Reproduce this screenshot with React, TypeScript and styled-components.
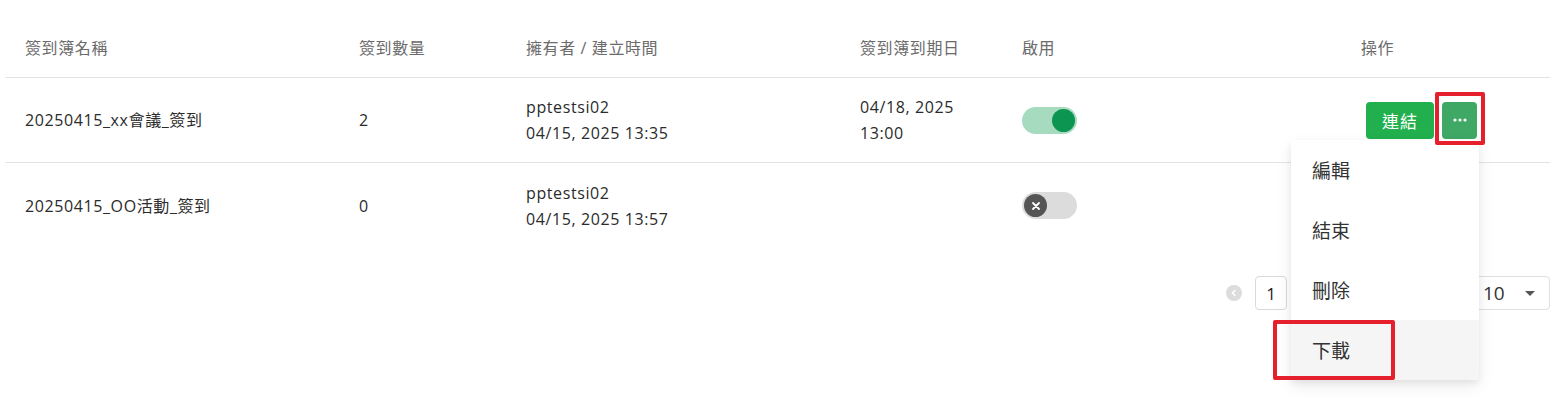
import React from 'react'
import styled, { createGlobalStyle } from 'styled-components'

const GlobalStyle = createGlobalStyle`
  html, body {
    margin: 0;
    background: #fff;
    font-family: "Open Sans", "Noto Sans CJK TC", sans-serif;
    color: #333;
  }
`

const COLS = '334px 167px 334px 162px 339px 209px'

const Page = styled.div`
  padding: 16px 12px 0 5px;
  width: 1562px;
  min-height: 399px;
  box-sizing: border-box;
`

const Table = styled.div`
  width: 1545px;
`

const HeadRow = styled.div`
  display: grid;
  grid-template-columns: ${COLS};
  height: 62px;
  align-items: center;
  border-bottom: 1px solid #e3e3e3;
  box-sizing: border-box;
`

const Row = styled.div<{ last?: boolean }>`
  display: grid;
  grid-template-columns: ${COLS};
  height: 85px;
  align-items: center;
  border-bottom: ${({ last }) => (last ? 'none' : '1px solid #e3e3e3')};
  box-sizing: border-box;
`

const HeadCell = styled.div`
  padding-left: 20px;
  font-size: 16px;
  color: #6b6b6b;
  letter-spacing: 0.6px;
`

const Cell = styled.div`
  padding-left: 20px;
  font-size: 16px;
  line-height: 26px;
  color: #2b2b2b;
  letter-spacing: 0.6px;
`

const Toggle = styled.div<{ on: boolean }>`
  position: relative;
  width: 55px;
  height: 27px;
  border-radius: 14px;
  background: ${({ on }) => (on ? '#a7dbc0' : '#dcdcdc')};
`

const Knob = styled.div<{ on: boolean }>`
  position: absolute;
  top: 2px;
  left: ${({ on }) => (on ? '30px' : '2px')};
  width: 23px;
  height: 23px;
  border-radius: 50%;
  background: ${({ on }) => (on ? '#0b9550' : '#555')};
  display: flex;
  align-items: center;
  justify-content: center;
`

const ActionCell = styled.div`
  padding-left: 25px;
  display: flex;
  align-items: center;
  gap: 8px;
`

const LinkButton = styled.button`
  width: 68px;
  height: 37px;
  border: none;
  border-radius: 4px;
  background: #21b04d;
  color: #fff;
  font-family: inherit;
  font-size: 17px;
  letter-spacing: 1px;
  padding: 0;
`

const MoreWrap = styled.div`
  position: relative;
  z-index: 5;
`

const MoreButton = styled.button`
  width: 35px;
  height: 37px;
  border: none;
  border-radius: 4px;
  background: #3fa865;
  color: #fff;
  padding: 0;
  display: flex;
  align-items: center;
  justify-content: center;
`

const RedBox = styled.div<{ l: number; t: number; w: number; h: number }>`
  position: absolute;
  left: ${({ l }) => l}px;
  top: ${({ t }) => t}px;
  width: ${({ w }) => w}px;
  height: ${({ h }) => h}px;
  border: 4px solid #e5202c;
  border-radius: 2px;
  box-sizing: border-box;
  pointer-events: none;
  z-index: 3;
`

const Menu = styled.div`
  position: absolute;
  top: 38px;
  right: -2px;
  width: 188px;
  background: #fff;
  box-shadow: 0 6px 16px rgba(0, 0, 0, 0.08), 0 3px 6px rgba(0, 0, 0, 0.06);
  border-radius: 2px;
  z-index: 2;
`

const MenuItem = styled.div<{ active?: boolean }>`
  position: relative;
  height: 60px;
  display: flex;
  align-items: center;
  padding-left: 21px;
  font-size: 19px;
  color: #333;
  background: ${({ active }) => (active ? '#f5f5f5' : '#fff')};
`

const Pager = styled.div`
  display: flex;
  justify-content: flex-end;
  align-items: center;
  gap: 12px;
  margin-top: 28px;
  width: 1545px;
`

const PrevIcon = styled.div`
  width: 16px;
  height: 16px;
  border-radius: 50%;
  background: #dcdcdc;
  display: flex;
  align-items: center;
  justify-content: center;
  margin-right: 1px;
`

const PageBox = styled.div`
  width: 32px;
  height: 34px;
  border: 1px solid #d9d9d9;
  border-radius: 4px;
  box-sizing: border-box;
  display: flex;
  align-items: center;
  justify-content: center;
  font-size: 17px;
  color: #222;
`

// the total-pages text and the next arrow sit behind the open menu
const PagerGap = styled.div`
  width: 151px;
  height: 34px;
`

const SizeSelect = styled.div`
  width: 88px;
  height: 34px;
  border: 1px solid #e0e0e0;
  border-radius: 4px;
  box-sizing: border-box;
  display: flex;
  align-items: center;
  justify-content: space-between;
  padding: 0 14px 0 20px;
  font-size: 19px;
  color: #333;
`

const Caret = styled.div`
  width: 0;
  height: 0;
  border-left: 5px solid transparent;
  border-right: 5px solid transparent;
  border-top: 5px solid #555;
`

const rows = [
  { name: '20250415_xx會議_簽到', count: '2', owner: 'pptestsi02', created: '04/15, 2025 13:35', due: ['04/18, 2025', '13:00'], on: true },
  { name: '20250415_OO活動_簽到', count: '0', owner: 'pptestsi02', created: '04/15, 2025 13:57', due: [], on: false },
]

const App: React.FC = () => {
  return (
    <Page>
      <GlobalStyle />
      <Table>
        <HeadRow>
          <HeadCell>簽到簿名稱</HeadCell>
          <HeadCell>簽到數量</HeadCell>
          <HeadCell>擁有者 / 建立時間</HeadCell>
          <HeadCell>簽到簿到期日</HeadCell>
          <HeadCell>啟用</HeadCell>
          <HeadCell>操作</HeadCell>
        </HeadRow>
        {rows.map((r, i) => (
          <Row key={r.name} last={i === rows.length - 1}>
            <Cell>{r.name}</Cell>
            <Cell>{r.count}</Cell>
            <Cell>
              {r.owner}
              <br />
              {r.created}
            </Cell>
            <Cell>
              {r.due.map((d) => (
                <div key={d}>{d}</div>
              ))}
            </Cell>
            <Cell>
              <Toggle on={r.on}>
                <Knob on={r.on}>
                  {!r.on && (
                    <svg width="10" height="10" viewBox="0 0 10 10">
                      <path d="M2 2 L8 8 M8 2 L2 8" stroke="#fff" strokeWidth="1.8" strokeLinecap="round" />
                    </svg>
                  )}
                </Knob>
              </Toggle>
            </Cell>
            {i === 0 ? (
              <ActionCell>
                <LinkButton>連結</LinkButton>
                <MoreWrap>
                  <MoreButton>
                    <svg width="14" height="4" viewBox="0 0 14 4">
                      <circle cx="2" cy="2" r="1.6" fill="#fff" />
                      <circle cx="7" cy="2" r="1.6" fill="#fff" />
                      <circle cx="12" cy="2" r="1.6" fill="#fff" />
                    </svg>
                  </MoreButton>
                  <RedBox l={-7} t={-10} w={50} h={53} />
                  <Menu>
                    <MenuItem>編輯</MenuItem>
                    <MenuItem>結束</MenuItem>
                    <MenuItem>刪除</MenuItem>
                    <MenuItem active>
                      下載
                      <RedBox l={-18} t={0} w={122} h={60} />
                    </MenuItem>
                  </Menu>
                </MoreWrap>
              </ActionCell>
            ) : (
              <ActionCell />
            )}
          </Row>
        ))}
      </Table>
      <Pager>
        <PrevIcon>
          <svg width="8" height="8" viewBox="0 0 8 8">
            <path d="M5 1.5 L2.5 4 L5 6.5" stroke="#fff" strokeWidth="1.6" fill="none" strokeLinecap="round" />
          </svg>
        </PrevIcon>
        <PageBox>1</PageBox>
        <PagerGap />
        <SizeSelect>
          10
          <Caret />
        </SizeSelect>
      </Pager>
    </Page>
  )
}

export default App
